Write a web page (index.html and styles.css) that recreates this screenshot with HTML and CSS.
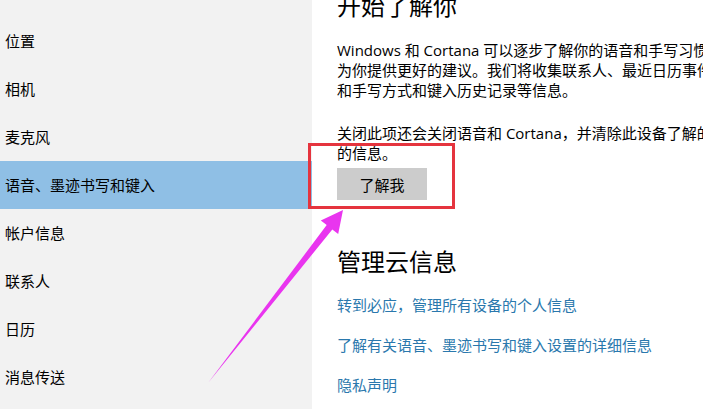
FILE: index.html
```html
<!DOCTYPE html>
<html lang="zh-CN">
<head>
  <meta charset="UTF-8">
  <meta name="viewport" content="width=device-width, initial-scale=1.0">
  <title>语音、墨迹书写和键入</title>
  <link rel="stylesheet" href="styles.css">
</head>
<body>
<div class="page">
  <nav class="sidebar">
    <div class="nav-item">位置</div>
    <div class="nav-item">相机</div>
    <div class="nav-item">麦克风</div>
    <div class="nav-item active">语音、墨迹书写和键入</div>
    <div class="nav-item">帐户信息</div>
    <div class="nav-item">联系人</div>
    <div class="nav-item">日历</div>
    <div class="nav-item">消息传送</div>
  </nav>
  <main class="content">
    <h1 class="title first">开始了解你</h1>
    <p class="text">Windows 和 Cortana 可以逐步了解你的语音和手写习惯，从而<br>为你提供更好的建议。我们将收集联系人、最近日历事件、语音<br>和手写方式和键入历史记录等信息。</p>
    <p class="text second">关闭此项还会关闭语音和 Cortana，并清除此设备了解的有关你<br>的信息。</p>
    <button class="btn">了解我</button>
    <h1 class="title cloud">管理云信息</h1>
    <a class="link" href="#">转到必应，管理所有设备的个人信息</a>
    <a class="link" href="#">了解有关语音、墨迹书写和键入设置的详细信息</a>
    <a class="link" href="#">隐私声明</a>
  </main>
</div>
<div class="highlight"></div>
<svg class="arrow" width="703" height="409" viewBox="0 0 703 409">
  <polygon fill="#e935ef" points="208,383 326.7,225.1 320.8,220.5 343,210 338.2,234.1 332.3,229.5"/>
</svg>
</body>
</html>
```

FILE: styles.css
```css
html, body {
  margin: 0;
  height: 100%;
  overflow: hidden;
}
body {
  font-family: "Open Sans", "Noto Sans CJK SC", sans-serif;
  color: #000;
  background: #fff;
  position: relative;
}
.page {
  display: flex;
  height: 409px;
}
.sidebar {
  width: 312px;
  flex-shrink: 0;
  background-color: #f2f2f2;
  padding-top: 17px;
  box-sizing: border-box;
}
.nav-item {
  height: 48px;
  line-height: 48px;
  padding-left: 5px;
  font-size: 15px;
  white-space: nowrap;
}
.nav-item.active {
  background-color: #8fbfe5;
}
.content {
  flex: 1;
  padding-left: 25px;
  display: flex;
  flex-direction: column;
  align-items: flex-start;
  white-space: nowrap;
}
.title {
  font-size: 24px;
  line-height: 32px;
  font-weight: normal;
  margin: 0;
}
.title.first {
  margin-top: -10px;
}
.title.cloud {
  margin-top: 46px;
}
.text {
  font-size: 15px;
  line-height: 20px;
  margin: 18px 0 0;
}
.text.second {
  margin-top: 23px;
}
.btn {
  margin-top: 5px;
  width: 90px;
  height: 32px;
  border: none;
  background-color: #cccccc;
  font-family: inherit;
  font-size: 15px;
  color: #000;
  padding: 0;
}
.link {
  font-size: 15px;
  line-height: 20px;
  color: #2a78ad;
  text-decoration: none;
  margin-top: 17px;
}
.link + .link {
  margin-top: 20px;
}
.highlight {
  position: absolute;
  left: 308px;
  top: 143px;
  width: 147px;
  height: 66px;
  border: 3px solid #e5343e;
  box-sizing: border-box;
}
.arrow {
  position: absolute;
  left: 0;
  top: 0;
}
```
